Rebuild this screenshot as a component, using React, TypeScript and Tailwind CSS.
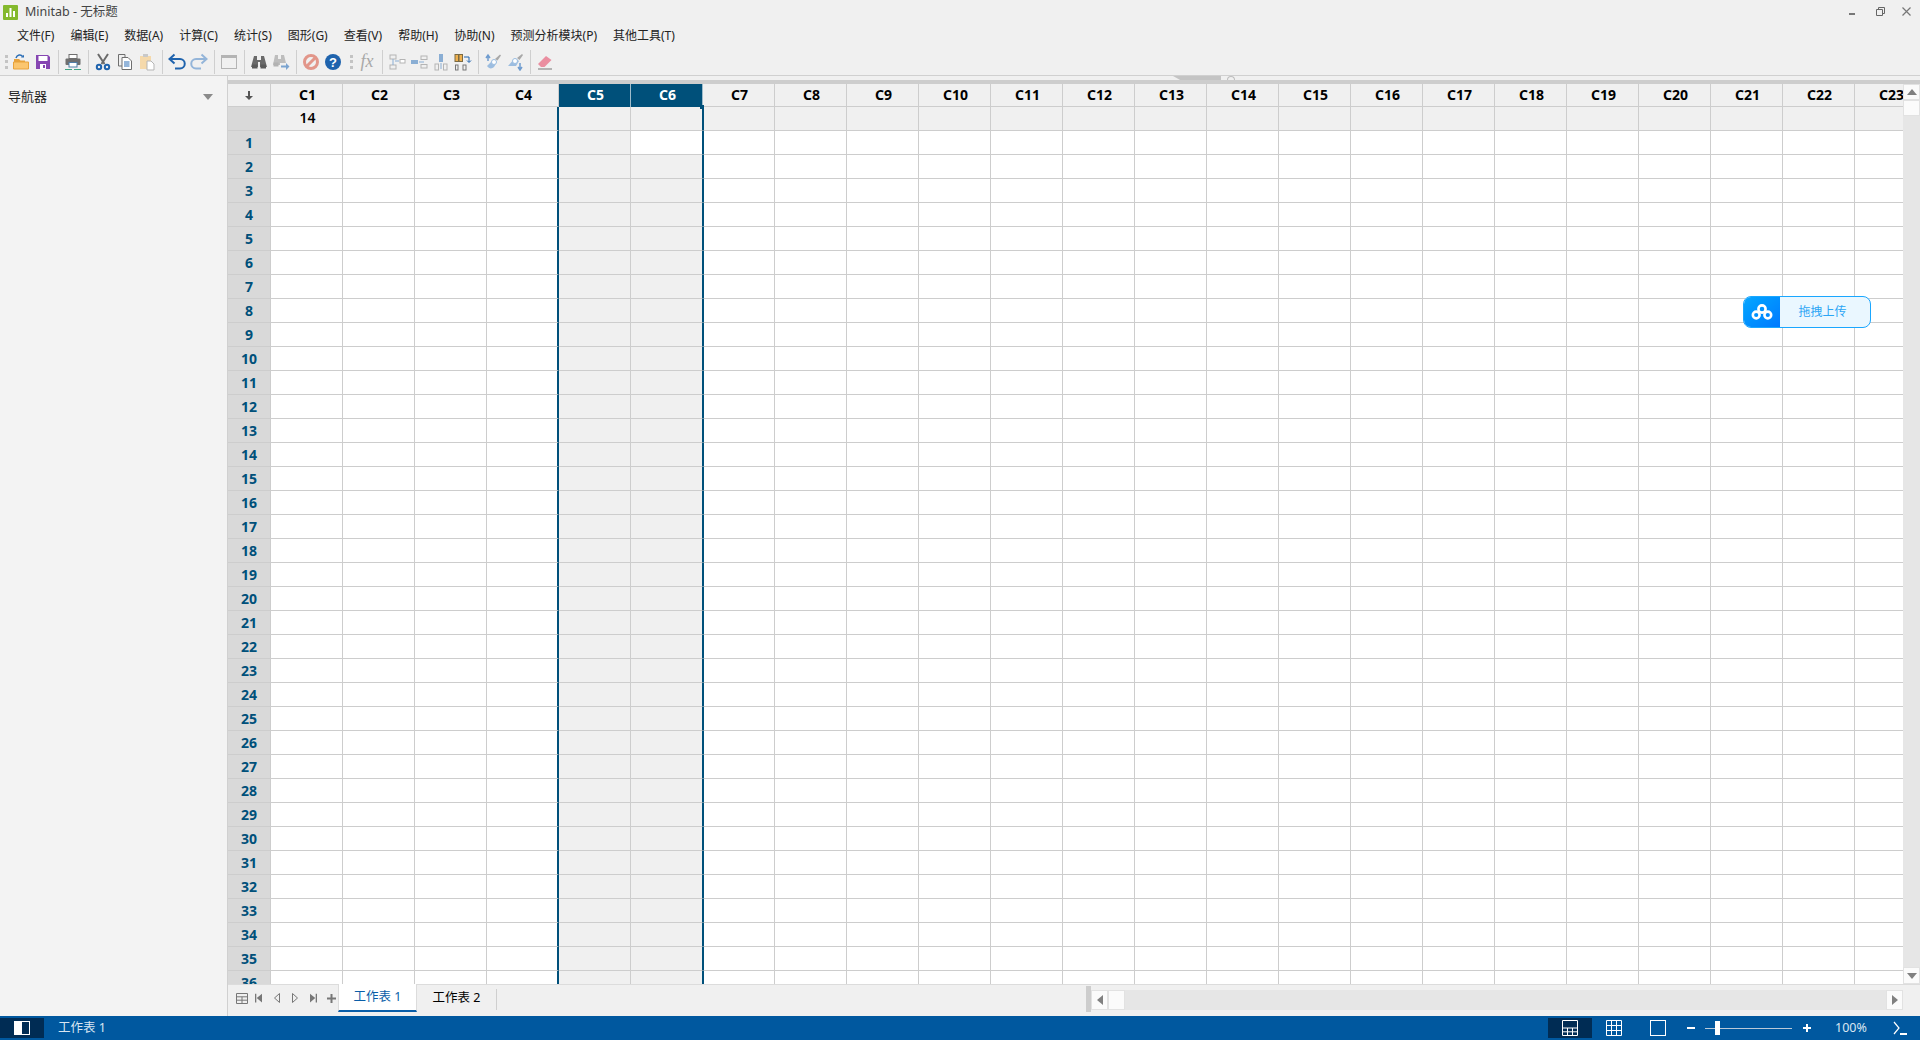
import type { ReactNode } from "react";

const menus = ["文件(F)", "编辑(E)", "数据(A)", "计算(C)", "统计(S)", "图形(G)", "查看(V)", "帮助(H)", "协助(N)", "预测分析模块(P)", "其他工具(T)"];
const columns = Array.from({ length: 23 }, (_, i) => "C" + (i + 1));
const rows = Array.from({ length: 36 }, (_, i) => i + 1);

const Sep = () => (
  <div className="w-2 h-6 flex justify-center">
    <div className="w-px h-full bg-[#cfcfcf]" />
  </div>
);

const Grip = () => (
  <div className="w-2 h-4 flex flex-col items-center justify-between py-px">
    <div className="w-[3px] h-[3px] bg-[#c4c4c4]" />
    <div className="w-[3px] h-[3px] bg-[#c4c4c4]" />
    <div className="w-[3px] h-[3px] bg-[#c4c4c4]" />
  </div>
);

const Tool = ({ children }: { children: ReactNode }) => (
  <div className="w-[22px] h-6 flex items-center justify-center">
    <svg width="18" height="18" viewBox="0 0 18 18" fill="none">
      {children}
    </svg>
  </div>
);

const Toolbar = () => (
  <div className="h-[29px] flex items-center pl-[2px] pt-[1px] border-b border-[#d0d0d0]">
    <Grip />
    <Tool>
      <path d="M2 6h5l1.500 1.500H13V9H2z" fill="#e8a33d" />
      <path d="M1.500 16V9h13.500l1.500 0V16z" fill="#fbc66f" stroke="#e8a33d" />
      <path d="M4 5 C5 1.500 9 1 10.500 3.500" stroke="#2a6db5" strokeWidth="1.500" />
      <path d="M9 4.500h3V1.800z" fill="#2a6db5" />
    </Tool>
    <Tool>
      <path d="M2 2h12l2 2v12H2z" fill="#8646b2" />
      <rect x="4.500" y="3" width="9" height="5" fill="#fff" />
      <rect x="6" y="11" width="6" height="5" fill="#fff" />
      <rect x="9" y="12" width="2" height="3" fill="#8646b2" />
    </Tool>
    <Sep />
    <Tool>
      <rect x="5" y="1.500" width="8" height="4" fill="#fff" stroke="#6f6f6f" />
      <rect x="1.500" y="5.500" width="15" height="6.500" rx="1" fill="#6f6f6f" />
      <rect x="5" y="9.500" width="8" height="4.500" fill="#fff" stroke="#4f7ea8" />
      <path d="M1 16.500h7M10 16.500h7" stroke="#3fa583" />
    </Tool>
    <Sep />
    <Tool>
      <path d="M4 1l6.500 10M14 1L7.500 11" stroke="#6b6b6b" strokeWidth="2" />
      <circle cx="5" cy="14" r="2.200" stroke="#1f63ad" strokeWidth="2" />
      <circle cx="13" cy="14" r="2.200" stroke="#1f63ad" strokeWidth="2" />
    </Tool>
    <Tool>
      <path d="M6 13H2.500V1.500H9V4" stroke="#6f6f6f" />
      <path d="M6 4.500h6l3.500 3.500v8.500H6z" fill="#fff" stroke="#6f6f6f" />
      <path d="M8 9h5.500M8 11h5.500M8 13h5.500" stroke="#2a6db5" />
    </Tool>
    <Tool>
      <rect x="2" y="3" width="11" height="13" fill="#f5d9ab" />
      <rect x="5" y="1" width="5" height="3" fill="#c9c9c9" />
      <path d="M9 8h4l3 3v6H9z" fill="#fff" stroke="#b5b5b5" />
    </Tool>
    <Sep />
    <Tool>
      <path d="M3 6h9a3.800 3.800 0 0 1 0 9.500H7" stroke="#1f63ad" strokeWidth="2" />
      <path d="M6.500 1.500L1.500 6l5 4.500" stroke="#1f63ad" strokeWidth="2" />
    </Tool>
    <Tool>
      <path d="M15 6H6a3.800 3.800 0 0 0 0 9.500h5" stroke="#94b5d9" strokeWidth="2" />
      <path d="M11.500 1.500l5 4.500-5 4.500" stroke="#94b5d9" strokeWidth="2" />
    </Tool>
    <Sep />
    <Tool>
      <rect x="1.500" y="2.500" width="15" height="13" stroke="#b4b4b4" />
      <rect x="1.500" y="2.500" width="15" height="2.500" fill="#b4b4b4" />
    </Tool>
    <Sep />
    <Tool>
      <path d="M4 3h3v4h4V3h3l3 11H10V9H8v5H1z" fill="#6a6a6a" />
      <rect x="2" y="11.500" width="5.500" height="4" fill="#5a5a5a" />
      <rect x="10.500" y="11.500" width="5.500" height="4" fill="#5a5a5a" />
    </Tool>
    <Tool>
      <path d="M3 2h3v4h3V2h3l2 8H8v2H1z" fill="#bdbdbd" />
      <rect x="1.500" y="9.500" width="5" height="4" fill="#b2b2b2" />
      <path d="M9 12.500h5V10l3.500 3.500-3.500 3.500v-2.500H9z" fill="#7ba4d0" />
    </Tool>
    <Sep />
    <Tool>
      <circle cx="9" cy="9" r="6.500" stroke="#e2968a" strokeWidth="3" />
      <path d="M4.500 13.500l9-9" stroke="#e2968a" strokeWidth="3" />
    </Tool>
    <Tool>
      <circle cx="9" cy="9" r="8" fill="#1f63ad" />
      <text x="9" y="13.500" textAnchor="middle" fontSize="13" fontWeight="700" fill="#fff" fontFamily="Liberation Sans, sans-serif">?</text>
    </Tool>
    <div className="w-[3px]" />
    <Grip />
    <div className="w-px" />
    <div className="w-[22px] h-6 flex items-center justify-center text-[18px] italic text-[#a8a8a8] font-['Liberation_Serif',serif]">fx</div>
    <Sep />
    <Tool>
      <rect x="2" y="2" width="6" height="4" stroke="#b4b4b4" />
      <rect x="2" y="12" width="6" height="4" stroke="#b4b4b4" />
      <rect x="12" y="6.500" width="5" height="3.500" fill="#fff" stroke="#b4b4b4" />
      <path d="M5 6v6M7 8h4" stroke="#8aaed4" />
    </Tool>
    <Tool>
      <rect x="1" y="7" width="7" height="4" fill="#8aaed4" />
      <rect x="11" y="3" width="6" height="3.500" stroke="#b4b4b4" />
      <rect x="11" y="11.500" width="6" height="3.500" stroke="#b4b4b4" />
      <path d="M9 9h5" stroke="#8aaed4" />
    </Tool>
    <Tool>
      <rect x="7" y="1" width="4" height="8" fill="#8aaed4" />
      <rect x="3" y="11" width="3.500" height="6" stroke="#b4b4b4" />
      <rect x="11.500" y="11" width="3.500" height="6" stroke="#b4b4b4" />
      <path d="M9 10v6" stroke="#8aaed4" />
    </Tool>
    <Tool>
      <rect x="1" y="1.500" width="3.500" height="7" fill="#eeb04e" stroke="#7a6a44" />
      <rect x="5" y="1.500" width="3.500" height="7" fill="#eeb04e" stroke="#7a6a44" />
      <rect x="1.500" y="12" width="2.500" height="5" stroke="#777" />
      <rect x="9" y="12" width="3" height="5" stroke="#777" />
      <path d="M10 4h5v5M13 7.500l2 2 2-2" stroke="#1f63ad" />
    </Tool>
    <Sep />
    <Tool>
      <path d="M10 6l-7 7c2 3 5 3 7 1l3-5z" fill="#9cbde0" />
      <circle cx="10" cy="9" r="2.500" fill="#fff" stroke="#9cbde0" />
      <path d="M11 6l5-4.500 1 1-3.500 5z" fill="#a8a8a8" />
      <path d="M4 8V3M2 5l2-3 2 3" stroke="#6f9ccf" strokeWidth="1.500" />
    </Tool>
    <Tool>
      <path d="M9 5l-7 8h8l3-5z" fill="#9cbde0" />
      <circle cx="9" cy="8" r="2.500" fill="#fff" stroke="#9cbde0" />
      <path d="M11 5l5-4 1 1-3.500 5z" fill="#a8a8a8" />
      <path d="M14 10v6M12 14l2 3 2-3" stroke="#6f9ccf" strokeWidth="1.500" />
    </Tool>
    <Sep />
    <Tool>
      <path d="M2 11l8-8 5.500 4-7 7H5z" fill="#ea8ea0" />
      <path d="M2 16h14" stroke="#777" />
    </Tool>
  </div>
);

const Sidebar = () => (
  <div className="w-[228px] bg-[#f3f3f3] border-r border-[#d0d0d0] shrink-0 flex items-start justify-between pl-2 pr-[14px] pt-[12px]">
    <span className="text-[13px] leading-4 text-[#222]">导航器</span>
    <svg width="10" height="6" viewBox="0 0 10 6" className="mt-[6px]">
      <path d="M0 0h10L5 6z" fill="#8a8a8a" />
    </svg>
  </div>
);

const Sheet = () => (
  <div className="flex-1 min-w-0 h-[900px] overflow-hidden">
    <div className="flex h-[23px]">
      <div className="w-[43px] shrink-0 bg-[#f0f0f0] border-r border-b border-[#cdcdcd] flex items-center justify-center">
        <svg width="8" height="9" viewBox="0 0 8 9">
          <path d="M3 0h2v5h3L4 9 0 5h3z" fill="#555" />
        </svg>
      </div>
      {columns.map((c, i) => (
        <div
          key={c}
          className={
            i === 4 || i === 5
              ? "relative w-[72px] shrink-0 pl-[2px] pb-[2px] bg-[#00507a] text-white border-r border-[#9fbccb] font-bold text-[14px] flex items-center justify-center"
              : "w-[72px] shrink-0 pl-[2px] pb-[2px] bg-[#f0f0f0] text-black border-r border-b border-[#cdcdcd] font-bold text-[14px] flex items-center justify-center"
          }
        >
          {c}
          {i === 5 && <div className="absolute -right-[2px] -bottom-[2px] z-10 w-1 h-1 bg-[#00507a]" />}
        </div>
      ))}
    </div>
    <div className="flex h-6">
      <div className="w-[43px] shrink-0 bg-[#d9d9d9] border-r border-b border-[#cdcdcd]" />
      {columns.map((c, i) => (
        <div
          key={c}
          className={
            i === 3
              ? "w-[72px] shrink-0 bg-[#f0f0f0] border-b border-[#cdcdcd] border-r-2 border-r-[#00507a]"
              : i === 4
              ? "w-[72px] shrink-0 bg-[#f0f0f0] border-r border-b border-[#cdcdcd]"
              : i === 5
              ? "w-[72px] shrink-0 bg-[#f0f0f0] border-b border-[#cdcdcd] border-r border-r-[#00507a]"
              : i === 6
              ? "w-[72px] shrink-0 bg-[#f0f0f0] border-r border-b border-[#cdcdcd] border-l border-l-[#00507a]"
              : "w-[72px] shrink-0 pl-[2px] pb-[2px] bg-[#f0f0f0] border-r border-b border-[#cdcdcd] text-[14px] font-semibold text-black flex items-center justify-center"
          }
        >
          {i === 0 ? "14" : ""}
        </div>
      ))}
    </div>
    {rows.map((r) => (
      <div key={r} className="flex h-6">
        <div className="w-[43px] shrink-0 pb-[1px] bg-[#d9d9d9] border-r border-b border-[#cdcdcd] text-[#00507a] font-bold text-[14px] flex items-center justify-center">
          {r}
        </div>
        {columns.map((c, i) => (
          <div
            key={c}
            className={
              i === 3
                ? "w-[72px] shrink-0 bg-white border-b border-[#cdcdcd] border-r-2 border-r-[#00507a]"
                : i === 4
                ? "w-[72px] shrink-0 bg-[#f0f0f0] border-r border-b border-[#cdcdcd]"
                : i === 5
                ? r === 1
                  ? "w-[72px] shrink-0 bg-white border-b border-[#cdcdcd] border-r border-r-[#00507a]"
                  : "w-[72px] shrink-0 bg-[#f0f0f0] border-b border-[#cdcdcd] border-r border-r-[#00507a]"
                : i === 6
                ? "w-[72px] shrink-0 bg-white border-r border-b border-[#cdcdcd] border-l border-l-[#00507a]"
                : "w-[72px] shrink-0 bg-white border-r border-b border-[#cdcdcd]"
            }
          />
        ))}
      </div>
    ))}
  </div>
);

const VScroll = () => (
  <div className="w-[17px] shrink-0 bg-[#e6e6e6] flex flex-col justify-between">
    <div>
      <div className="h-4 bg-[#fbfbfb] border border-[#e2e2e2] flex items-center justify-center">
        <svg width="10" height="6" viewBox="0 0 10 6">
          <path d="M5 0l5 6H0z" fill="#808080" />
        </svg>
      </div>
      <div className="h-4 bg-[#fbfbfb] border border-[#e2e2e2]" />
    </div>
    <div className="h-[17px] bg-[#fbfbfb] border border-[#e2e2e2] flex items-center justify-center">
      <svg width="10" height="6" viewBox="0 0 10 6">
        <path d="M0 0h10L5 6z" fill="#808080" />
      </svg>
    </div>
  </div>
);

const TabBar = () => (
  <div className="h-8 bg-[#f0f0f0] border-t border-[#dcdcdc] flex items-start">
    <div className="w-[110px] h-[26px] shrink-0 flex items-center pl-2">
      <svg width="12" height="11" viewBox="0 0 12 11" fill="none" stroke="#777">
        <path d="M.5.5h11v10H.5zM.5 3.800h11M.5 7.200h11M6 3.800v6.700" />
      </svg>
      <svg width="7" height="10" viewBox="0 0 8 10" className="ml-[7px]">
        <path d="M0 0h1.500v10H0zM8 0v10L2 5z" fill="#777" />
      </svg>
      <svg width="6" height="10" viewBox="0 0 6 10" fill="none" stroke="#777" className="ml-[12px]">
        <path d="M5.500.500v9L.5 5z" />
      </svg>
      <svg width="6" height="10" viewBox="0 0 6 10" fill="none" stroke="#777" className="ml-[12px]">
        <path d="M.5.500v9l5-4.500z" />
      </svg>
      <svg width="7" height="10" viewBox="0 0 8 10" className="ml-[12px]">
        <path d="M8 0H6.500v10H8zM0 0v10l6-5z" fill="#777" />
      </svg>
      <svg width="9" height="9" viewBox="0 0 9 9" className="ml-[10px]">
        <path d="M3.500 0h2v3.500H9v2H5.500V9h-2V5.500H0v-2h3.500z" fill="#777" />
      </svg>
    </div>
    <div className="w-[79px] h-7 -mt-px bg-white border-b-2 border-[#0a5ea8] text-[#0a5ea8] text-[12.5px] flex items-center justify-center border-x border-x-[#dcdcdc]">
      工作表 1
    </div>
    <div className="w-[79px] h-[26px] text-black text-[12.5px] flex items-center justify-center">工作表 2</div>
    <div className="w-px h-[21px] mt-1 bg-[#cfcfcf]" />
    <div className="flex-1" />
    <div className="w-[5px] h-[26px] mt-[1px] bg-[#cdcdcd] shrink-0" />
    <div className="w-[812px] h-5 mt-[5px] bg-[#e6e6e6] shrink-0 flex justify-between">
      <div className="flex">
        <div className="w-[17px] bg-[#fbfbfb] border border-[#e2e2e2] flex items-center justify-center">
          <svg width="6" height="10" viewBox="0 0 6 10">
            <path d="M6 0v10L0 5z" fill="#808080" />
          </svg>
        </div>
        <div className="w-[17px] bg-[#fbfbfb] border border-[#e2e2e2]" />
      </div>
      <div className="w-[17px] bg-[#fbfbfb] border border-[#e2e2e2] flex items-center justify-center">
        <svg width="6" height="10" viewBox="0 0 6 10">
          <path d="M0 0v10l6-5z" fill="#808080" />
        </svg>
      </div>
    </div>
    <div className="w-[17px] shrink-0" />
  </div>
);

const StatusBar = () => (
  <div className="h-6 bg-[#00589f] text-[#d9e6f2] flex items-center shrink-0 text-[12px]">
    <div className="w-11 h-5 bg-[#002c54] flex items-center justify-center">
      <div className="w-4 h-[14px] border border-white flex">
        <div className="w-[7px] bg-white" />
      </div>
    </div>
    <span className="ml-[14px] text-[12.5px]">工作表 1</span>
    <div className="flex-1" />
    <div className="w-11 h-5 bg-[#002c54] flex items-center justify-center">
      <svg width="16" height="16" viewBox="0 0 16 16" fill="none" stroke="#fff">
        <path d="M.5.5h15v15H.5zM.5 8h15M.5 11.800h15M5.500 8v7.500M10.500 8v7.500" />
      </svg>
    </div>
    <div className="w-11 h-5 flex items-center justify-center">
      <svg width="16" height="16" viewBox="0 0 16 16" fill="none" stroke="#fff">
        <path d="M.5.500h15v15H.5zM.5 5.500h15M.5 10.500h15M5.500.500v15M10.500.500v15" />
      </svg>
    </div>
    <div className="w-[44px] h-5 flex items-center justify-center">
      <div className="w-4 h-4 border border-white" />
    </div>
    <div className="w-2 h-0.5 bg-white ml-[7px]" />
    <div className="w-[87px] h-px bg-[#b9c9d8] ml-[10px] relative flex items-center">
      <div className="w-[5px] h-[14px] bg-white ml-[10px]" />
    </div>
    <div className="w-2 h-2 ml-[11px] relative flex items-center justify-center">
      <div className="w-2 h-0.5 bg-white" />
      <div className="w-0.5 h-2 bg-white absolute" />
    </div>
    <span className="ml-[24px] w-[39px] text-[12.5px]">100%</span>
    <svg width="14" height="14" viewBox="0 0 14 14" fill="none" stroke="#fff" className="ml-[19px] mr-[13px]">
      <path d="M1 1l5 6-5 6" strokeWidth="1.200" />
      <path d="M7 13h7" strokeWidth="2" />
    </svg>
  </div>
);

const UploadWidget = () => (
  <div className="absolute left-[1743px] top-[296px] w-[128px] h-8 rounded-lg border border-[#1aa7ff] bg-[#eaf7ff] flex overflow-hidden">
    <div className="w-9 bg-gradient-to-br from-[#0aa6ff] to-[#0079ff] flex items-center justify-center">
      <svg width="22" height="16" viewBox="0 0 22 16" fill="none" stroke="#fff" strokeWidth="2.600">
        <circle cx="11" cy="5" r="3.600" />
        <circle cx="5.200" cy="11" r="3.400" />
        <circle cx="16.800" cy="11" r="3.400" />
      </svg>
    </div>
    <div className="flex-1 flex items-center justify-center pr-[5px] text-[12px] text-[#2aa5f5]">拖拽上传</div>
  </div>
);

export default function App() {
  return (
    <div className="relative w-[1920px] h-[1040px] overflow-hidden bg-[#f0f0f0] flex flex-col font-['Noto_Sans','Noto_Sans_CJK_SC',sans-serif] text-black">
      <div className="h-[24px] flex items-center pl-[3px] shrink-0">
        <svg width="15" height="15" viewBox="0 0 15 15">
          <rect width="15" height="15" rx="1" fill="#84b92d" />
          <path d="M3 8h2v4H3zM6.500 3h2v9h-2zM10 6h2v6h-2z" fill="#fff" />
        </svg>
        <span className="ml-[7px] text-[12.5px] text-[#444]">Minitab - 无标题</span>
        <div className="flex-1" />
        <div className="w-[6px] h-0.5 bg-[#777] mr-[21px] mt-[3px]" />
        <svg width="9" height="9" viewBox="0 0 9 9" fill="none" stroke="#666" className="mr-[17px] -mt-[1px]">
          <path d="M.5 2.500h6v6h-6zM2.500 2.500V.5h6v6h-2" />
        </svg>
        <svg width="9" height="9" viewBox="0 0 9 9" fill="none" stroke="#777" strokeWidth="1.200" className="mr-[9px] -mt-[1px]">
          <path d="M.5.5l8 8M8.500.5l-8 8" />
        </svg>
      </div>
      <div className="h-[23px] flex items-center pl-[9px] shrink-0 text-[12px] text-[#222]">
        {menus.map((m) => (
          <span key={m} className="px-2 whitespace-nowrap">
            {m}
          </span>
        ))}
      </div>
      <Toolbar />
      <div className="flex flex-1 min-h-0">
        <Sidebar />
        <div className="flex-1 min-w-0 flex flex-col">
          <div className="h-1 flex pl-[945px]">
            <div className="w-[48px] h-1 bg-[#c4c4c4] [clip-path:polygon(0_0,100%_0,100%_100%,15%_100%)]" />
            <div className="w-2 h-1 ml-[6px] rounded-t-full border-t border-x border-[#bdbdbd]" />
          </div>
          <div className="h-1 bg-[#cdcdcd]" />
          <div className="flex flex-1 min-h-0">
            <Sheet />
            <VScroll />
          </div>
          <TabBar />
        </div>
      </div>
      <StatusBar />
      <UploadWidget />
    </div>
  );
}
